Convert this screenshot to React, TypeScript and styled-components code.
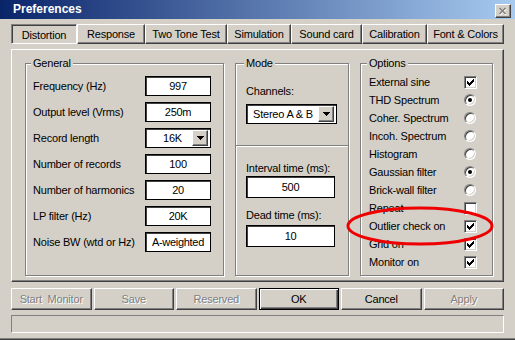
import React from 'react';
import styled, { createGlobalStyle, css } from 'styled-components';

const Global = createGlobalStyle`
  html, body { margin: 0; padding: 0; background: #D4D0C8; }
  body {
    font-family: "Liberation Sans", Arial, sans-serif;
    font-size: 11px;
    letter-spacing: -0.2px;
    color: #000;
  }
  * { box-sizing: border-box; }
`;

const raised = css`
  border-top: 1px solid #fff;
  border-left: 1px solid #fff;
  border-bottom: 1px solid #404040;
  border-right: 1px solid #404040;
  box-shadow: inset -1px -1px 0 #808080;
`;

const Win = styled.div`
  position: relative;
  width: 515px;
  height: 340px;
  background: #D4D0C8;
  display: flex;
  flex-direction: column;
  border-bottom: 1px solid #404040;
  box-shadow: inset 0 -1px 0 #808080;
  overflow: hidden;
`;

const TitleBar = styled.div`
  height: 19px;
  flex: none;
  display: flex;
  align-items: flex-start;
  justify-content: space-between;
  padding: 0 4px 0 13px;
  background: linear-gradient(to right, #0A246A, #A6CAF0);
`;

const TitleText = styled.span`
  color: #fff;
  font-weight: bold;
  font-size: 12px;
  letter-spacing: 0;
  line-height: 19px;
`;

const CloseBtn = styled.div`
  width: 16px;
  height: 14px;
  margin-top: 4px;
  background: #D4D0C8;
  ${raised};
  display: flex;
  align-items: center;
  justify-content: center;
`;

const Body = styled.div`
  flex: 1;
  display: flex;
  flex-direction: column;
  padding: 5px 11px 0 11px;
`;

const Tabs = styled.div`
  display: flex;
  height: 20px;
`;

const Tab = styled.div<{ $w: number; $active?: boolean }>`
  width: ${(p) => p.$w}px;
  flex: none;
  display: flex;
  align-items: center;
  justify-content: center;
  white-space: nowrap;
  ${(p) =>
    p.$active
      ? css`
          border-top: 1px solid #808080;
          border-left: 1px solid #808080;
          border-bottom: 1px solid #fff;
          border-right: 1px solid #fff;
          box-shadow: inset 1px 1px 0 #404040;
          padding-top: 1px;
        `
      : raised};
`;

const Panel = styled.div`
  margin-top: 5px;
  height: 233px;
  ${raised};
  padding: 7px 9px 0 13px;
  display: grid;
  grid-template-columns: 199px 114px 133px;
  column-gap: 11px;
  align-items: start;
`;

const Group = styled.fieldset<{ $pl: number; $pr: number; $pt: number }>`
  margin: 0;
  min-width: 0;
  height: 219px;
  border: 1px solid #808080;
  box-shadow: inset 1px 1px 0 #fff, 1px 1px 0 #fff;
  padding: ${(p) => `${p.$pt}px ${p.$pr}px 0 ${p.$pl}px`};
`;

const Legend = styled.legend`
  padding: 0 2px;
  margin-left: -2px;
  line-height: 13px;
  background: #D4D0C8;
`;

const FormGrid = styled.div`
  display: grid;
  grid-template-columns: 1fr 66px;
  grid-auto-rows: 20px;
  row-gap: 6px;
  align-items: center;
`;

const Label = styled.span`
  white-space: nowrap;
  line-height: 13px;
`;

const Field = styled.div<{ $w?: number; $h?: number }>`
  width: ${(p) => (p.$w ? `${p.$w}px` : 'auto')};
  height: ${(p) => p.$h ?? 20}px;
  background: #fff;
  border: 1px solid #000;
  box-shadow: inset 1px 1px 0 #404040;
  display: flex;
  align-items: center;
  justify-content: center;
  white-space: nowrap;
  letter-spacing: -0.3px;
  padding-bottom: 1px;
`;

const Combo = styled.div<{ $w: number }>`
  width: ${(p) => p.$w}px;
  height: 20px;
  background: #fff;
  border: 1px solid #000;
  box-shadow: inset 1px 1px 0 #404040;
  display: flex;
  align-items: center;
  padding: 1px 2px 1px 6px;
  white-space: nowrap;
`;

const ComboText = styled.span<{ $align: 'left' | 'right' }>`
  flex: 1;
  text-align: ${(p) => p.$align};
  padding-right: ${(p) => (p.$align === 'right' ? '10px' : '0')};
`;

const DropBtn = styled.div`
  width: 16px;
  height: 16px;
  flex: none;
  background: #D4D0C8;
  ${raised};
  display: flex;
  align-items: center;
  justify-content: center;
`;

const ModeLabel = styled.div<{ $mt: number }>`
  margin-top: ${(p) => p.$mt}px;
  line-height: 13px;
  white-space: nowrap;
`;

const ModeBox = styled.div<{ $mt: number }>`
  margin-top: ${(p) => p.$mt}px;
`;

const Separator = styled.div`
  margin: 21px -10px 0 -10px;
  height: 2px;
  border-top: 1px solid #808080;
  border-bottom: 1px solid #fff;
`;

const OptionList = styled.div`
  display: grid;
  grid-template-columns: 1fr 13px;
  grid-auto-rows: 18px;
  align-items: center;
`;

const Check = styled.span`
  width: 13px;
  height: 13px;
  background: #fff;
  border-top: 1px solid #808080;
  border-left: 1px solid #808080;
  border-bottom: 1px solid #fff;
  border-right: 1px solid #fff;
  box-shadow: inset 1px 1px 0 #404040, inset -1px -1px 0 #D4D0C8;
  display: flex;
  align-items: center;
  justify-content: center;
`;

const Radio = styled.span`
  width: 12px;
  height: 12px;
  border-radius: 50%;
  background: #fff;
  border: 1px solid;
  border-color: #808080 #fff #fff #808080;
  box-shadow: inset 1px 1px 0 #404040, inset -1px -1px 0 #D4D0C8;
  display: flex;
  align-items: center;
  justify-content: center;
`;

const Dot = styled.span`
  width: 4px;
  height: 4px;
  border-radius: 50%;
  background: #000;
`;

const ButtonRow = styled.div`
  margin-top: 6px;
  height: 22px;
  display: flex;
  gap: 2px;
`;

const Btn = styled.div<{ $disabled?: boolean; $default?: boolean }>`
  flex: 1;
  display: flex;
  align-items: center;
  justify-content: center;
  white-space: pre;
  color: ${(p) => (p.$disabled ? '#808080' : '#000')};
  text-shadow: ${(p) => (p.$disabled ? '1px 1px 0 #fff' : 'none')};
  ${(p) =>
    p.$default
      ? css`
          border: 1px solid #000;
          box-shadow: inset 1px 1px 0 #fff, inset -1px -1px 0 #404040, inset -2px -2px 0 #808080;
        `
      : raised};
`;

const Status = styled.div`
  margin-top: 5px;
  height: 18px;
  border-top: 1px solid #808080;
  border-left: 1px solid #808080;
  border-bottom: 1px solid #fff;
  border-right: 1px solid #fff;
`;

const Annotation = styled.svg`
  position: absolute;
  left: 344px;
  top: 204px;
  pointer-events: none;
`;

const CheckMark = () => (
  <svg width="7" height="7" viewBox="0 0 7 7" shapeRendering="crispEdges">
    {[2, 3, 4, 3, 2, 1, 0].map((y, x) => (
      <rect key={x} x={x} y={y} width="1" height="3" fill="#000" />
    ))}
  </svg>
);

const Arrow = () => (
  <svg width="7" height="4" viewBox="0 0 7 4" shapeRendering="crispEdges">
    <path d="M0 0h7v1H0zM1 1h5v1H1zM2 2h3v1H2zM3 3h1v1H3z" fill="#000" />
  </svg>
);

const tabs: [string, number][] = [
  ['Distortion', 66],
  ['Response', 68],
  ['Two Tone Test', 82],
  ['Simulation', 64],
  ['Sound card', 71],
  ['Calibration', 65],
  ['Font & Colors', 77],
];

const general: { label: string; value: string; combo?: boolean }[] = [
  { label: 'Frequency (Hz)', value: '997' },
  { label: 'Output level (Vrms)', value: '250m' },
  { label: 'Record length', value: '16K', combo: true },
  { label: 'Number of records', value: '100' },
  { label: 'Number of harmonics', value: '20' },
  { label: 'LP filter (Hz)', value: '20K' },
  { label: 'Noise BW (wtd or Hz)', value: 'A-weighted' },
];

const options: [string, 'check' | 'radio', boolean][] = [
  ['External sine', 'check', true],
  ['THD Spectrum', 'radio', true],
  ['Coher. Spectrum', 'radio', false],
  ['Incoh. Spectrum', 'radio', false],
  ['Histogram', 'radio', false],
  ['Gaussian filter', 'radio', true],
  ['Brick-wall filter', 'radio', false],
  ['Repeat', 'check', false],
  ['Outlier check on', 'check', true],
  ['Grid on', 'check', true],
  ['Monitor on', 'check', true],
];

const buttons: { label: string; disabled?: boolean; def?: boolean }[] = [
  { label: 'Start  Monitor', disabled: true },
  { label: 'Save', disabled: true },
  { label: 'Reserved', disabled: true },
  { label: 'OK', def: true },
  { label: 'Cancel' },
  { label: 'Apply', disabled: true },
];

export default function App() {
  return (
    <>
      <Global />
      <Win>
        <TitleBar>
          <TitleText>Preferences</TitleText>
          <CloseBtn>
            <svg width="10" height="9" viewBox="0 0 10 9">
              <path d="M2 2l6 6M8 2l-6 6" stroke="#fff" strokeWidth="1.6" />
              <path d="M1.5 1l6 6M7.5 1l-6 6" stroke="#808080" strokeWidth="1.6" />
            </svg>
          </CloseBtn>
        </TitleBar>
        <Body>
          <Tabs>
            {tabs.map(([t, w], i) => (
              <Tab key={t} $w={w} $active={i === 0}>
                {t}
              </Tab>
            ))}
          </Tabs>
          <Panel>
            <Group $pl={7} $pr={12} $pt={6}>
              <Legend>General</Legend>
              <FormGrid>
                {general.map((g) => (
                  <React.Fragment key={g.label}>
                    <Label>{g.label}</Label>
                    {g.combo ? (
                      <Combo $w={66}>
                        <ComboText $align="right">{g.value}</ComboText>
                        <DropBtn>
                          <Arrow />
                        </DropBtn>
                      </Combo>
                    ) : (
                      <Field>{g.value}</Field>
                    )}
                  </React.Fragment>
                ))}
              </FormGrid>
            </Group>
            <Group $pl={10} $pr={10} $pt={0}>
              <Legend>Mode</Legend>
              <ModeLabel $mt={15}>Channels:</ModeLabel>
              <ModeBox $mt={6}>
                <Combo $w={91}>
                  <ComboText $align="left">Stereo A &amp; B</ComboText>
                  <DropBtn>
                    <Arrow />
                  </DropBtn>
                </Combo>
              </ModeBox>
              <Separator />
              <ModeLabel $mt={15}>Interval time (ms):</ModeLabel>
              <ModeBox $mt={1}>
                <Field $w={89} $h={22}>500</Field>
              </ModeBox>
              <ModeLabel $mt={11}>Dead time (ms):</ModeLabel>
              <ModeBox $mt={3}>
                <Field $w={89} $h={22}>10</Field>
              </ModeBox>
            </Group>
            <Group $pl={8} $pr={15} $pt={3}>
              <Legend>Options</Legend>
              <OptionList>
                {options.map(([label, kind, on]) => (
                  <React.Fragment key={label}>
                    <Label>{label}</Label>
                    {kind === 'check' ? (
                      <Check>{on && <CheckMark />}</Check>
                    ) : (
                      <Radio>{on && <Dot />}</Radio>
                    )}
                  </React.Fragment>
                ))}
              </OptionList>
            </Group>
          </Panel>
          <ButtonRow>
            {buttons.map((b) => (
              <Btn key={b.label} $disabled={b.disabled} $default={b.def}>
                {b.label}
              </Btn>
            ))}
          </ButtonRow>
          <Status />
        </Body>
        <Annotation width="152" height="44" viewBox="0 0 152 44">
          <ellipse cx="76" cy="22" rx="72" ry="18" fill="none" stroke="#ee0000" strokeWidth="3" />
        </Annotation>
      </Win>
    </>
  );
}
